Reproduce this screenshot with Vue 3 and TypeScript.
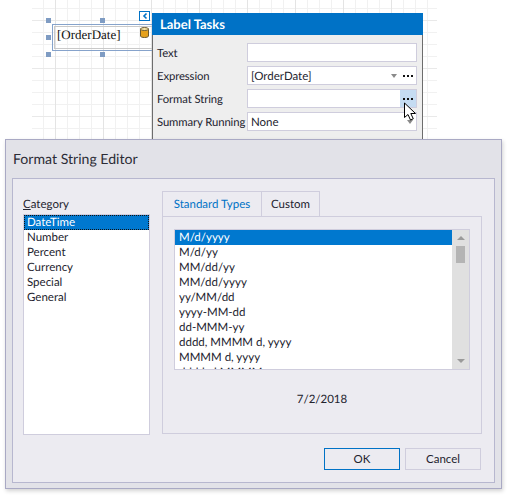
<script setup lang="ts">
const taskRows = [
  { label: 'Text', value: '', combo: false, dots: false, hot: false },
  { label: 'Expression', value: '[OrderDate]', combo: true, dots: true, hot: false },
  { label: 'Format String', value: '', combo: false, dots: true, hot: true },
  { label: 'Summary Running', value: 'None', combo: true, dots: false, hot: false }
]
const categories = ['DateTime', 'Number', 'Percent', 'Currency', 'Special', 'General']
const formats = [
  'M/d/yyyy',
  'M/d/yy',
  'MM/dd/yy',
  'MM/dd/yyyy',
  'yy/MM/dd',
  'yyyy-MM-dd',
  'dd-MMM-yy',
  'dddd, MMMM d, yyyy',
  'MMMM d, yyyy',
  'dddd, d MMMM'
]
const handles = [
  { id: 'tl', cls: 'h-tl' },
  { id: 'tm', cls: 'h-tm' },
  { id: 'ml', cls: 'h-ml' },
  { id: 'bl', cls: 'h-bl' },
  { id: 'bm', cls: 'h-bm' }
]
</script>

<template>
  <div class="page">
    <div class="surface"></div>

    <div v-for="h in handles" :key="h.id" class="handle" :class="h.cls"></div>
    <div class="label-box">
      <div class="label-inner">[OrderDate]</div>
    </div>
    <svg class="db-icon" width="9" height="11" viewBox="0 0 9 11">
      <path d="M0.5 2v7c0 .9 1.8 1.5 4 1.5s4-.6 4-1.5V2z" fill="#e5a11c" stroke="#6b5a30" stroke-width="1" />
      <ellipse cx="4.5" cy="2" rx="4" ry="1.5" fill="#f8e6a8" stroke="#6b5a30" stroke-width="1" />
    </svg>
    <div class="smart-tag">
      <svg width="8" height="8" viewBox="0 0 8 8">
        <path d="M5.5 1.5 3 4l2.500 2.500" fill="none" stroke="#0072c6" stroke-width="1.600" />
      </svg>
    </div>

    <div class="tasks">
      <div class="tasks-head">Label Tasks</div>
      <div class="tasks-body">
        <div v-for="row in taskRows" :key="row.label" class="task-row">
          <span class="task-label">{{ row.label }}</span>
          <div class="task-input">
            <span class="task-value">{{ row.value }}</span>
            <span v-if="row.combo" class="combo-arrow"></span>
            <span v-if="row.dots" class="dots" :class="{ 'dots-hot': row.hot }">
              <i></i><i></i><i></i>
            </span>
          </div>
        </div>
      </div>
    </div>

    <svg class="cursor" width="14" height="20" viewBox="0 0 14 20">
      <path
        d="M1.500 1v14.500l3.500-3 2.500 5.500 2.800-1.200-2.500-5.300h4.700z"
        fill="#fff"
        stroke="#000"
        stroke-width="1"
        stroke-linejoin="round"
      />
    </svg>

    <div class="dialog">
      <div class="dialog-title">Format String Editor</div>
      <div class="dialog-panel">
        <div class="columns">
          <div class="category">
            <div class="category-label"><u>C</u>ategory</div>
            <ul class="category-list">
              <li
                v-for="(c, i) in categories"
                :key="c"
                class="category-item"
                :class="{ 'category-selected': i === 0 }"
              >
                {{ c }}
              </li>
            </ul>
          </div>

          <div class="tabs">
            <div class="tab-strip">
              <div class="tab tab-active">Standard Types</div>
              <div class="tab">Custom</div>
            </div>
            <div class="tab-pane">
              <div class="format-list">
                <ul class="format-items">
                  <li
                    v-for="(f, i) in formats"
                    :key="f"
                    class="format-item"
                    :class="{ 'format-selected': i === 0 }"
                  >
                    {{ f }}
                  </li>
                </ul>
                <div class="scrollbar">
                  <span class="arrow-up"></span>
                  <span class="thumb"></span>
                  <span class="arrow-down"></span>
                </div>
              </div>
              <div class="preview">7/2/2018</div>
            </div>
          </div>
        </div>
        <div class="buttons">
          <button class="btn btn-default">OK</button>
          <button class="btn">Cancel</button>
        </div>
      </div>
    </div>
  </div>
</template>

<style>
html,
body {
  margin: 0;
  background: #fff;
}
</style>

<style scoped>
.page {
  position: relative;
  width: 507px;
  height: 496px;
  overflow: hidden;
  background: #fff;
  font-family: Lato, "Noto Sans", sans-serif;
  font-size: 11.5px;
  text-rendering: geometricPrecision;
  color: #23232e;
}

.surface {
  position: absolute;
  left: 32px;
  top: 0;
  width: 405px;
  height: 139px;
  background-color: #fff;
  background-image:
    linear-gradient(to right, #e4e4e4 1px, transparent 1px),
    linear-gradient(to bottom, #e9e9e9 1px, transparent 1px),
    linear-gradient(to right, #f1f1f1 1px, transparent 1px),
    linear-gradient(to bottom, #f1f1f1 1px, transparent 1px);
  background-size: 48px 48px, 48px 48px, 12px 12px, 12px 12px;
  background-position: 23px 0, 0 20px, 11px 0, 0 8px;
}

.handle {
  position: absolute;
  width: 5px;
  height: 5px;
  background: #7f9cc3;
}
.h-tl { left: 46px; top: 18px; }
.h-tm { left: 100px; top: 18px; }
.h-ml { left: 46px; top: 35px; }
.h-bl { left: 46px; top: 52px; }
.h-bm { left: 100px; top: 52px; }

.label-box {
  position: absolute;
  left: 52px;
  top: 24px;
  width: 110px;
  height: 27px;
  box-sizing: border-box;
  border: 1px solid #86a3cb;
  padding: 1px;
}
.label-inner {
  height: 100%;
  box-sizing: border-box;
  border: 1px solid #c9c9c9;
  padding-left: 2px;
  font-family: "Liberation Serif", serif;
  font-size: 13px;
  line-height: 16px;
  color: #111;
}

.db-icon {
  position: absolute;
  left: 140px;
  top: 27px;
}

.smart-tag {
  position: absolute;
  left: 139px;
  top: 11px;
  width: 11px;
  height: 10px;
  box-sizing: border-box;
  border: 1px solid #0072c6;
  background: #fff;
  display: flex;
  align-items: center;
  justify-content: center;
}

.tasks {
  position: absolute;
  left: 152px;
  top: 13px;
  width: 271px;
  height: 135px;
  box-sizing: border-box;
  border-left: 1px solid #6d6d6d;
  border-right: 1px solid #6d6d6d;
  background: #eeeeee;
}
.tasks-head {
  height: 22px;
  margin: 0 -1px;
  padding-left: 8px;
  background: #0072c6;
  color: #fff;
  font-weight: 700;
  font-size: 13px;
  line-height: 22px;
}
.tasks-body {
  display: flex;
  flex-direction: column;
  gap: 4px;
  padding: 8px 5px 0 4px;
}
.task-row {
  display: flex;
  align-items: center;
  height: 19px;
}
.task-label {
  width: 90px;
  flex: none;
  white-space: nowrap;
  font-size: 11.300px;
  letter-spacing: -0.1px;
  padding-top: 2px;
}
.task-input {
  flex: 1;
  height: 19px;
  box-sizing: border-box;
  border: 1px solid #cfcddd;
  background: #fff;
  display: flex;
  align-items: center;
  padding-left: 3px;
}
.task-value {
  flex: 1;
  padding-top: 2px;
}
.combo-arrow {
  width: 0;
  height: 0;
  border-left: 3.500px solid transparent;
  border-right: 3.500px solid transparent;
  border-top: 4px solid #8a8a8a;
  margin-right: 3px;
}
.dots {
  display: flex;
  align-self: stretch;
  align-items: center;
  justify-content: center;
  gap: 2px;
  width: 16px;
}
.dots i {
  width: 2px;
  height: 2px;
  background: #111;
}
.dots-hot {
  background: #c5dcf2;
}

.cursor {
  position: absolute;
  left: 403px;
  top: 102px;
  z-index: 2;
}

.dialog {
  position: absolute;
  left: 5px;
  top: 139px;
  width: 497px;
  height: 350px;
  box-sizing: border-box;
  border: 1px solid #a9a9c4;
  background: #e2e2e8;
  box-shadow: 1px 2px 4px rgba(0, 0, 0, 0.18);
  padding: 0 6px 6px;
  display: flex;
  flex-direction: column;
  z-index: 3;
}
.dialog-title {
  height: 38px;
  padding-left: 1px;
  font-size: 14.100px;
  line-height: 40px;
  color: #2c2c36;
}
.dialog-panel {
  flex: 1;
  box-sizing: border-box;
  border: 1px solid #b7b7cf;
  background: #ecebf1;
  padding: 12px 12px 12px 10px;
  display: flex;
  flex-direction: column;
}
.columns {
  display: flex;
  gap: 12px;
}
.category {
  width: 127px;
  flex: none;
  padding-top: 5px;
}
.category-label {
  height: 18px;
  line-height: 18px;
  padding-left: 0;
}
.category-list {
  list-style: none;
  margin: 0;
  height: 221px;
  box-sizing: border-box;
  border: 1px solid #cfcddd;
  background: #fff;
  padding: 0;
}
.category-item {
  height: 15px;
  line-height: 16px;
  padding-left: 3px;
}
.category-selected {
  background: #0078cf;
  color: #fff;
  outline: 1px dotted #111;
  outline-offset: -1px;
}

.tabs {
  flex: 1;
  min-width: 0;
}
.tab-strip {
  display: flex;
  height: 26px;
  position: relative;
}
.tab {
  box-sizing: border-box;
  width: 58px;
  height: 26px;
  border: 1px solid #cfcddd;
  border-left: 0;
  text-align: center;
  line-height: 25px;
}
.tab-active {
  width: 100px;
  border-left: 1px solid #cfcddd;
  border-bottom: 0;
  color: #0072c6;
  position: relative;
  z-index: 1;
}
.tab-pane {
  height: 218px;
  box-sizing: border-box;
  margin-top: -1px;
  border: 1px solid #cfcddd;
  border-top: 1px solid #cfcddd;
  padding: 12px 11px 0;
}
.format-list {
  height: 141px;
  box-sizing: border-box;
  border: 1px solid #cfcddd;
  background: #fff;
  display: flex;
  overflow: hidden;
}
.format-items {
  list-style: none;
  margin: 0;
  padding: 0;
  flex: 1;
  min-width: 0;
}
.format-item {
  height: 15px;
  line-height: 16px;
  padding-left: 4px;
  white-space: nowrap;
}
.format-selected {
  background: #0078cf;
  color: #fff;
}
.scrollbar {
  width: 17px;
  flex: none;
  background: #e0e0e0;
  display: flex;
  flex-direction: column;
  align-items: center;
  padding: 6px 0;
  box-sizing: border-box;
}
.arrow-up,
.arrow-down {
  width: 0;
  height: 0;
  border-left: 4px solid transparent;
  border-right: 4px solid transparent;
}
.arrow-up {
  border-bottom: 4px solid #9a9a9a;
}
.arrow-down {
  border-top: 4px solid #9a9a9a;
  margin-top: auto;
}
.thumb {
  width: 9px;
  height: 17px;
  margin-top: 6px;
  background: #b4b4b4;
}
.preview {
  margin-top: 22px;
  text-align: center;
  line-height: 16px;
}

.buttons {
  display: flex;
  justify-content: flex-end;
  gap: 5px;
  margin-top: 13px;
  margin-right: 1px;
}
.btn {
  width: 76px;
  height: 22px;
  box-sizing: border-box;
  border: 1px solid #cfcddd;
  background: #ecebf1;
  font: inherit;
  color: inherit;
  padding: 0 0 2px;
}
.btn-default {
  border-color: #0072c6;
}
</style>
